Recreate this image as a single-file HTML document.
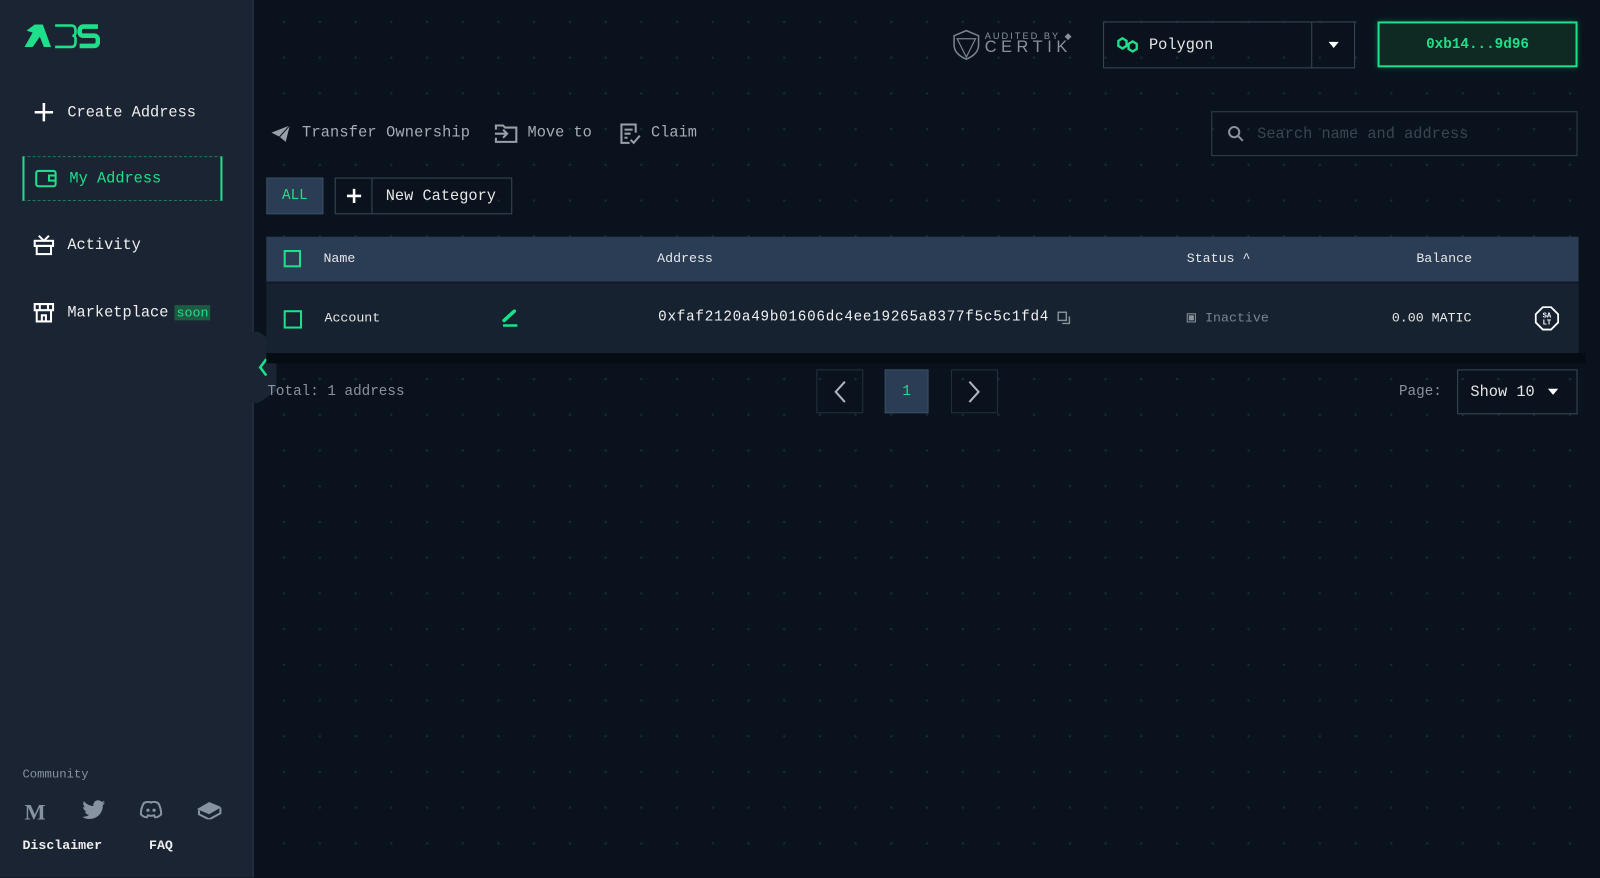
<!DOCTYPE html>
<html><head><meta charset="utf-8"><style>
*{box-sizing:border-box;margin:0;padding:0}
body{width:1600px;height:877px;overflow:hidden;background:#0a131d;font-family:"Liberation Mono",monospace;color:#e6e6e6;position:relative}
#wrap{position:absolute;left:0;top:0;width:1568px;height:860px;transform:scale(1.020408);transform-origin:0 0}
.main{position:absolute;left:249px;top:0;right:0;bottom:0;background-color:#0a131d;background-image:radial-gradient(circle,#1e2a37 1px,transparent 1.3px);background-size:35px 35px;background-position:12px 4px}
.side{position:absolute;left:0;top:0;width:249px;height:860px;background:#1a2433;border-right:2px solid #222d3b}
.nav{position:absolute;left:22px;width:196px;height:44px;display:flex;align-items:center;font-size:15px;color:#eee}
.nav svg{margin-left:10px;margin-right:12px}
.g{color:#1ee08a}
.abs{position:absolute}
.btn{position:absolute;border:1px solid #3a4756;display:flex;align-items:center}
</style></head><body><div id="wrap">
<div class="side">
 <svg class="abs" style="left:22px;top:22px" width="76" height="26" viewBox="0 0 76 26">
  <path d="M2 24 L10 10 L4 8 L12 2 L20 2 L28 24 L21 24 L17 14 L10 24Z" fill="#1ee08a"/>
  <path d="M32 3 H48 Q52 3 52 8 V10 Q52 13 49 13 Q52 13 52 16 V19 Q52 24 48 24 H32" fill="none" stroke="#1ee08a" stroke-width="2.5"/>
  <path d="M74 4 H60 Q56 4 56 9 Q56 13 60 13 H70 Q74 13 74 18 Q74 23 70 23 H56" fill="none" stroke="#1ee08a" stroke-width="4.5"/>
 </svg>
 <div class="nav" style="top:88px"><svg width="22" height="22"><path d="M11 2V20M2 11H20" stroke="#fff" stroke-width="2.5"/></svg>Create Address</div>
 <div class="nav g" style="top:153px;border:1px dashed #1e7a55;border-left:2px solid #1ee08a;border-right:2px solid #1ee08a"><svg width="22" height="20"><rect x="1.5" y="2.5" width="19" height="15" rx="2" fill="none" stroke="#1ee08a" stroke-width="2"/><path d="M20 7H14V12H20" fill="none" stroke="#1ee08a" stroke-width="2"/></svg>My Address</div>
 <div class="nav" style="top:218px"><svg width="22" height="22"><rect x="2" y="7" width="18" height="5" fill="none" stroke="#fff" stroke-width="2"/><rect x="4" y="12" width="14" height="8" fill="none" stroke="#fff" stroke-width="2"/><path d="M6 2L11 7L16 2" fill="none" stroke="#fff" stroke-width="2"/></svg>Activity</div>
 <div class="nav" style="top:284px;width:230px"><svg width="22" height="22"><path d="M2 3H20V9H2Z M7 3V9 M15 3V9 M4 9V20H18V9 M9 20V14H13V20" fill="none" stroke="#fff" stroke-width="2"/></svg>Marketplace <span style="background:#1d5a42;color:#1ee08a;font-size:13px;padding:0 2px;margin-left:6px">soon</span></div>
 <div class="abs" style="left:22px;top:752px;font-size:12px;color:#8893a0">Community</div>
 <div class="abs" style="left:24px;top:783px;font:bold 22px 'Liberation Serif',serif;color:#8893a0">M</div>
 <svg class="abs" style="left:80px;top:784px" width="24" height="20" viewBox="0 0 24 20"><path d="M23 2.5c-.8.4-1.7.6-2.6.7.9-.6 1.6-1.4 2-2.5-.9.5-1.900.9-2.9 1.1C18.6.9 17.4.3 16.1.3c-2.5 0-4.6 2-4.6 4.6 0 .4 0 .7.1 1C7.8 5.7 4.4 3.9 2.2 1.1c-.4.7-.6 1.5-.6 2.3 0 1.6.8 3 2 3.8-.8 0-1.5-.2-2.1-.6v.1c0 2.2 1.6 4.1 3.7 4.5-.4.1-.8.2-1.2.2-.3 0-.6 0-.9-.1.6 1.8 2.300 3.2 4.3 3.2-1.6 1.2-3.6 2-5.7 2H.6c2 1.3 4.5 2.1 7.1 2.1 8.5 0 13.1-7 13.1-13.1v-.6c.9-.7 1.7-1.500 2.2-2.4z" fill="#8893a0"/></svg>
 <svg class="abs" style="left:137px;top:785px" width="22" height="17" viewBox="0 0 22 17"><path d="M4 2Q8 0 11 1.5Q14 0 18 2Q21 7 21 13Q18 16 15 16L14 14Q11 15 8 14L7 16Q4 16 1 13Q1 7 4 2Z" fill="none" stroke="#8893a0" stroke-width="2"/><circle cx="8" cy="9" r="1.6" fill="#8893a0"/><circle cx="14" cy="9" r="1.6" fill="#8893a0"/></svg>
 <svg class="abs" style="left:192px;top:785px" width="26" height="18" viewBox="0 0 26 18"><path d="M1 8L13 1L25 6L13 13Z" fill="#8893a0"/><path d="M3 9V13L13 18L24 12V7" fill="none" stroke="#8893a0" stroke-width="2"/></svg>
 <div class="abs" style="left:22px;top:821px;font-size:13px;font-weight:bold;color:#eee">Disclaimer</div>
 <div class="abs" style="left:146px;top:821px;font-size:13px;font-weight:bold;color:#eee">FAQ</div>
</div>
<div class="main"></div>
<svg class="abs" style="left:245px;top:325px" width="28" height="70" viewBox="0 0 28 70"><path d="M0 0L8 0L26 12V58L8 70H0Z" fill="#1a2433"/><path d="M16 27L10 35L16 43" fill="none" stroke="#1ee08a" stroke-width="2.5"/></svg>
<svg class="abs" style="left:932px;top:28px" width="30" height="32" viewBox="0 0 30 32"><path d="M15 2L27 7V16Q27 25 15 30Q3 25 3 16V7Z" fill="none" stroke="#7b838e" stroke-width="1.5"/><path d="M6 10H24L15 28Z" fill="none" stroke="#7b838e" stroke-width="1.2"/></svg>
<div class="abs" style="left:965px;top:30px;font:9px 'Liberation Sans',sans-serif;letter-spacing:2px;color:#8a929c">AUDITED BY ◆</div>
<div class="abs" style="left:965px;top:38px;font:16px 'Liberation Sans',sans-serif;letter-spacing:4.5px;color:#8a929c">CERTIK</div>
<div class="btn" style="left:1081px;top:21px;width:247px;height:46px">
 <svg style="margin-left:12px" width="22" height="20" viewBox="0 0 22 20"><path d="M2 6L6 3.5L10 6V11L6 13.5L2 11Z M12 9L16 6.5L20 9V14L16 16.5L12 14Z" fill="none" stroke="#1ee08a" stroke-width="2.3"/></svg>
 <span style="margin-left:10px;font-size:15px">Polygon</span>
 <div style="position:absolute;left:203px;top:0;bottom:0;border-left:1px solid #3a4756;width:43px;display:flex;align-items:center;justify-content:center"><svg width="12" height="8"><path d="M1 1H11L6 7Z" fill="#fff"/></svg></div>
</div>
<div class="btn" style="left:1350px;top:21px;width:196px;height:45px;border:2px solid #1ee08a;background:#0f2a22;box-shadow:0 0 6px #1ee08a55;justify-content:center;color:#1ee08a;font-weight:bold;font-size:14px">0xb14...9d96</div>
<svg class="abs" style="left:265px;top:122px" width="20" height="18" viewBox="0 0 20 18"><path d="M1 8L19 1L15 17L9 12Z" fill="#9aa0a8"/><path d="M9 12L19 1" stroke="#0a131d" stroke-width="1"/></svg>
<div class="abs" style="left:296px;top:122px;font-size:15px;color:#a7acb3;letter-spacing:0.15px">Transfer Ownership</div>
<svg class="abs" style="left:484px;top:121px" width="24" height="20" viewBox="0 0 24 20"><path d="M2 6V2H9L11 4H22V18H2V14 M1 10H13 M9 6L13 10L9 14" fill="none" stroke="#9aa0a8" stroke-width="2"/></svg>
<div class="abs" style="left:517px;top:122px;font-size:15px;color:#a7acb3">Move to</div>
<svg class="abs" style="left:607px;top:120px" width="22" height="22" viewBox="0 0 22 22"><path d="M10 20H2V2H16V10 M5 7H13 M5 11H11 M5 15H8 M11 17L14 20L20 13" fill="none" stroke="#9aa0a8" stroke-width="2"/></svg>
<div class="abs" style="left:638px;top:122px;font-size:15px;color:#a7acb3">Claim</div>
<div class="btn" style="left:1187px;top:109px;width:359px;height:44px;border-color:#323e4b">
 <svg style="margin-left:15px" width="16" height="16"><circle cx="6.5" cy="6.5" r="5" fill="none" stroke="#8a929c" stroke-width="2"/><path d="M10 10L15 15" stroke="#8a929c" stroke-width="2"/></svg>
 <span style="margin-left:13px;font-size:15px;color:#3a4552">Search name and address</span>
</div>
<div class="btn" style="left:261px;top:174px;width:56px;height:36px;background:#2a3d54;border-color:#3b4d63;justify-content:center;color:#1ee08a;font-size:14px">ALL</div>
<div class="btn" style="left:328px;top:174px;width:174px;height:36px">
 <div style="width:36px;height:100%;border-right:1px solid #3a4756;display:flex;align-items:center;justify-content:center"><svg width="14" height="14"><path d="M7 0V14M0 7H14" stroke="#fff" stroke-width="2.5"/></svg></div>
 <span style="margin-left:13px;font-size:15px">New Category</span>
</div>
<div class="abs" style="left:261px;top:232px;width:1286px;height:44px;background:#2a3d54"></div>
<div class="abs" style="left:261px;top:276px;width:1286px;height:70px;background:#172230;border-top:2px solid #111a25"></div>
<div class="abs" style="left:261px;top:346px;width:1293px;height:10px;background:#060c13"></div>
<div class="abs" style="left:278px;top:245px;width:17px;height:17px;border:2px solid #1ee08a"></div>
<div class="abs" style="left:317px;top:246px;font-size:13px">Name</div>
<div class="abs" style="left:644px;top:246px;font-size:13px">Address</div>
<div class="abs" style="left:1163px;top:246px;font-size:13px">Status ^</div>
<div class="abs" style="left:1388px;top:246px;font-size:13px">Balance</div>
<div class="abs" style="left:278px;top:304px;width:18px;height:18px;border:2px solid #1ee08a"></div>
<div class="abs" style="left:318px;top:304px;font-size:13px">Account</div>
<svg class="abs" style="left:491px;top:302px" width="18" height="20"><path d="M3 12L13 3" stroke="#1ee08a" stroke-width="3.5" stroke-linecap="round"/><path d="M2 17H16" stroke="#1ee08a" stroke-width="2.5"/></svg>
<div class="abs" style="left:645px;top:303px;font-size:14px;color:#f2f2f2;letter-spacing:0.72px">0xfaf2120a49b01606dc4ee19265a8377f5c5c1fd4</div>
<svg class="abs" style="left:1036px;top:305px" width="14" height="14"><rect x="1" y="1" width="8" height="8" fill="none" stroke="#8a929c" stroke-width="1.4"/><path d="M12 5V12H5" fill="none" stroke="#8a929c" stroke-width="1.4"/></svg>
<div class="abs" style="left:1163px;top:307px;width:9px;height:9px;border:1px solid #8a929c;padding:1px"><div style="width:5px;height:5px;background:#8a929c"></div></div>
<div class="abs" style="left:1181px;top:304px;font-size:13px;color:#7b838e">Inactive</div>
<div class="abs" style="left:1364px;top:304px;font-size:13px">0.00 MATIC</div>
<svg class="abs" style="left:1504px;top:300px" width="24" height="24" viewBox="0 0 24 24"><path d="M8 1H16L23 8V16L16 23H8L1 16V8Z" fill="none" stroke="#fff" stroke-width="1.8"/><text x="12" y="11" font-size="7" fill="#fff" text-anchor="middle" font-family="Liberation Mono" font-weight="bold">SA</text><text x="12" y="18" font-size="7" fill="#fff" text-anchor="middle" font-family="Liberation Mono" font-weight="bold">LT</text></svg>
<div class="abs" style="left:262px;top:376px;font-size:14px;color:#8a929c">Total: 1 address</div>
<div class="btn" style="left:800px;top:362px;width:46px;height:43px;border-color:#25303d;justify-content:center"><svg width="14" height="24"><path d="M12 2L3 12L12 22" fill="none" stroke="#b0b5bb" stroke-width="2"/></svg></div>
<div class="btn" style="left:867px;top:362px;width:43px;height:43px;background:#2a3d54;border-color:#3b4d63;justify-content:center;color:#1ee08a;font-size:14px">1</div>
<div class="btn" style="left:932px;top:362px;width:46px;height:43px;border-color:#25303d;justify-content:center"><svg width="14" height="24"><path d="M2 2L11 12L2 22" fill="none" stroke="#b0b5bb" stroke-width="2"/></svg></div>
<div class="abs" style="left:1371px;top:376px;font-size:14px;color:#8a929c">Page:</div>
<div class="btn" style="left:1428px;top:362px;width:118px;height:44px"><span style="margin-left:12px;font-size:15px">Show 10</span><svg style="margin-left:12px" width="12" height="8"><path d="M1 1H11L6 7Z" fill="#fff"/></svg></div>
</div></body></html>
